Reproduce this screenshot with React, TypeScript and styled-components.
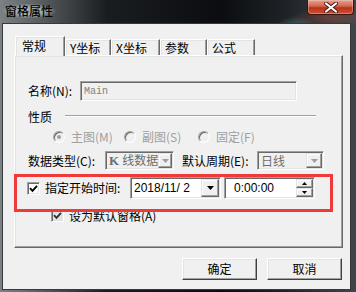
import React from "react";
import styled, { createGlobalStyle } from "styled-components";

const GlobalStyle = createGlobalStyle`
  html, body {
    margin: 0;
    padding: 0;
    background: #1b1e22;
  }
  body {
    font-family: "Noto Sans CJK SC", "Liberation Sans", sans-serif;
    font-size: 12px;
    color: #000;
  }
`;

const Window = styled.div`
  width: 356px;
  height: 292px;
  display: flex;
  flex-direction: column;
  overflow: hidden;
  background:
    radial-gradient(ellipse 22px 14px at 296px 30px, rgba(120, 200, 215, 0.45), transparent),
    radial-gradient(ellipse 40px 10px at 330px 18px, rgba(200, 80, 60, 0.35), transparent),
    linear-gradient(90deg, #7c8184 0%, #565b5e 12%, #1a1d20 30%, #0b0d10 62%, #1e2226 80%, #3f464a 100%);
`;

const TitleBar = styled.div`
  height: 23px;
  flex-shrink: 0;
  display: flex;
  align-items: flex-start;
  justify-content: space-between;
`;

const Title = styled.span`
  margin: 4px 0 0 3px;
  padding: 0 2px;
  font-size: 12px;
  font-weight: 500;
  line-height: 14px;
  color: #000;
  background: radial-gradient(ellipse at center, rgba(175, 182, 188, 0.85) 40%, transparent 75%);
`;

const CloseButton = styled.div`
  width: 47px;
  height: 15px;
  box-sizing: border-box;
  margin-right: 2px;
  border: 1px solid #3a1510;
  border-top: none;
  border-radius: 0 0 4px 4px;
  background: linear-gradient(#e3a292 0%, #d46a53 42%, #b93319 56%, #cc5034 100%);
  box-shadow: inset 0 0 0 1px rgba(255, 220, 210, 0.35);
  display: flex;
  align-items: center;
  justify-content: center;
`;

const Client = styled.div`
  flex: 1;
  margin: 0 5px 2px 2px;
  border: 1px solid #34393c;
  background: #f0f0f0;
  display: flex;
  flex-direction: column;
  padding: 12px 7px 0 11px;
`;

const TabRow = styled.div`
  height: 19px;
  display: flex;
  align-items: flex-end;
  padding-left: 1px;
  position: relative;
  z-index: 1;
`;

const Tab = styled.div<{ $active?: boolean; $w: number }>`
  width: ${(p) => p.$w}px;
  height: ${(p) => (p.$active ? 20 : 16)}px;
  margin-bottom: ${(p) => (p.$active ? -1 : 0)}px;
  box-sizing: border-box;
  background: #f0f0f0;
  border-top: 1px solid #fff;
  border-left: 1px solid #fff;
  border-right: 1px solid #696969;
  border-radius: 2px 0 0 0;
  box-shadow: inset -1px 0 0 #a0a0a0, inset 1px 1px 0 #e3e3e3;
  padding: ${(p) => (p.$active ? "3px 0 0 6px" : "2px 0 0 4px")};
  font-size: 12px;
  line-height: 12px;
  white-space: nowrap;
`;

const Panel = styled.div`
  width: 329px;
  height: 193px;
  box-sizing: border-box;
  border-top: 1px solid #fff;
  border-left: 1px solid #fff;
  border-right: 1px solid #696969;
  border-bottom: 1px solid #696969;
  box-shadow: inset -1px -1px 0 #a0a0a0, inset 1px 1px 0 #e3e3e3;
  padding: 25px 0 0 13px;
  position: relative;
  display: flex;
  flex-direction: column;
`;

const Row = styled.div<{ $top?: number; $h: number; $indent?: number }>`
  display: flex;
  align-items: center;
  height: ${(p) => p.$h}px;
  margin-top: ${(p) => p.$top ?? 0}px;
  padding-left: ${(p) => p.$indent ?? 0}px;
`;

const Label = styled.span<{ $w?: number; $gap?: number; $muted?: boolean }>`
  display: inline-block;
  width: ${(p) => (p.$w ? `${p.$w}px` : "auto")};
  margin-left: ${(p) => p.$gap ?? 0}px;
  font-size: 12px;
  line-height: 12px;
  white-space: nowrap;
  color: ${(p) => (p.$muted ? "#a0a0a0" : "#000")};
`;

const Field = styled.div<{ $w: number; $h: number; $white?: boolean; $gap?: number }>`
  width: ${(p) => p.$w}px;
  height: ${(p) => p.$h}px;
  margin-left: ${(p) => p.$gap ?? 0}px;
  box-sizing: border-box;
  border-top: 1px solid #a0a0a0;
  border-left: 1px solid #a0a0a0;
  border-right: 1px solid #fff;
  border-bottom: 1px solid #fff;
  box-shadow: inset 1px 1px 0 #696969, inset -1px -1px 0 #e3e3e3;
  background: ${(p) => (p.$white ? "#fff" : "#f0f0f0")};
  display: flex;
  align-items: center;
  padding: 1px;
`;

const MonoText = styled.span`
  font-family: "Liberation Mono", monospace;
  font-size: 10px;
  color: #808080;
  padding-left: 2px;
`;

const ComboText = styled.span`
  flex: 1;
  padding-left: 2px;
  font-size: 12px;
  line-height: 12px;
  color: #6d6d6d;
  white-space: nowrap;
`;

const SerifK = styled.span`
  font-family: "Liberation Serif", serif;
  font-weight: bold;
  font-size: 13px;
  margin-right: 3px;
`;

const DateText = styled.span<{ $pad: number }>`
  flex: 1;
  padding-left: ${(p) => p.$pad}px;
  font-family: "Liberation Sans", sans-serif;
  font-size: 12px;
  line-height: 14px;
  white-space: pre;
`;

const DropButton = styled.div<{ $w: number; $h: number }>`
  width: ${(p) => p.$w}px;
  height: ${(p) => p.$h}px;
  box-sizing: border-box;
  background: #f0f0f0;
  border-top: 1px solid #e3e3e3;
  border-left: 1px solid #e3e3e3;
  border-right: 1px solid #696969;
  border-bottom: 1px solid #696969;
  box-shadow: inset -1px -1px 0 #a0a0a0, inset 1px 1px 0 #fff;
  display: flex;
  align-items: center;
  justify-content: center;
`;

const Spin = styled.div`
  display: flex;
  flex-direction: column;
  align-self: stretch;
`;

const Group = styled.div`
  display: flex;
  align-items: flex-start;
  height: 12px;
  margin-top: 10px;
`;

const EtchedLine = styled.div`
  width: 251px;
  margin: 4px 0 0 13px;
  border-top: 1px solid #a0a0a0;
  border-bottom: 1px solid #fff;
`;

const RadioItem = styled.div<{ $w?: number }>`
  display: flex;
  align-items: center;
  width: ${(p) => (p.$w ? `${p.$w}px` : "auto")};
`;

const RadioDot = styled.span<{ $on?: boolean }>`
  width: 12px;
  height: 12px;
  box-sizing: border-box;
  border-radius: 50%;
  border: 1px solid;
  border-color: #a0a0a0 #fff #fff #a0a0a0;
  box-shadow: inset 1px 1px 0 #696969;
  background: #f0f0f0;
  margin-right: 6px;
  display: flex;
  align-items: center;
  justify-content: center;
  &::after {
    content: "";
    width: 4px;
    height: 4px;
    border-radius: 50%;
    background: ${(p) => (p.$on ? "#a0a0a0" : "transparent")};
  }
`;

const CheckBox = styled.span<{ $gap?: number; $dim?: boolean }>`
  width: 13px;
  height: 13px;
  flex-shrink: 0;
  box-sizing: border-box;
  margin-left: ${(p) => p.$gap ?? 0}px;
  border-top: 1px solid #a0a0a0;
  border-left: 1px solid #a0a0a0;
  border-right: 1px solid #fff;
  border-bottom: 1px solid #fff;
  box-shadow: inset 1px 1px 0 #696969, inset -1px -1px 0 #e3e3e3;
  background: ${(p) => (p.$dim ? "#e3e3e3" : "#fff")};
  display: flex;
  align-items: center;
  justify-content: center;
`;

const RedMark = styled.div`
  position: absolute;
  left: -1px;
  top: 118px;
  width: 319px;
  height: 38px;
  box-sizing: border-box;
  border: 3px solid #f03a3a;
  pointer-events: none;
`;

const ButtonRow = styled.div`
  display: flex;
  justify-content: flex-end;
  gap: 10px;
  margin-top: 10px;
  padding-right: 1px;
`;

const Button = styled.div`
  width: 75px;
  height: 22px;
  box-sizing: border-box;
  background: #f0f0f0;
  border-top: 1px solid #fff;
  border-left: 1px solid #fff;
  border-right: 1px solid #404040;
  border-bottom: 1px solid #404040;
  box-shadow: inset -1px -1px 0 #a0a0a0, inset 1px 1px 0 #e3e3e3;
  display: flex;
  align-items: center;
  justify-content: center;
  font-size: 12px;
  line-height: 12px;
`;

const Arrow = ({ color = "#000", w = 7 }: { color?: string; w?: number }) => (
  <svg width={w} height={4} viewBox={`0 0 ${w} 4`}>
    <path d={`M0 0 H${w} L${w / 2} 4 Z`} fill={color} />
  </svg>
);

const Check = ({ color = "#000" }: { color?: string }) => (
  <svg width="9" height="9" viewBox="0 0 9 9">
    <path d="M1 4.2 L3.5 6.8 L8 1.8" fill="none" stroke={color} strokeWidth="1.9" />
  </svg>
);

export default function App() {
  const tabs = [
    { name: "常规", w: 50, active: true },
    { name: "Y坐标", w: 46 },
    { name: "X坐标", w: 49 },
    { name: "参数", w: 47 },
    { name: "公式", w: 48 },
  ];

  return (
    <>
      <GlobalStyle />
      <Window>
        <TitleBar>
          <Title>窗格属性</Title>
          <CloseButton>
            <svg width="16" height="11" viewBox="0 0 16 11">
              <path d="M3 1.5 L13 9.5 M13 1.5 L3 9.5" stroke="#4a1a12" strokeWidth="4" strokeLinecap="round" />
              <path d="M3 1.5 L13 9.5 M13 1.5 L3 9.5" stroke="#fff" strokeWidth="2.2" strokeLinecap="round" />
            </svg>
          </CloseButton>
        </TitleBar>

        <Client>
          <TabRow>
            {tabs.map((t) => (
              <Tab key={t.name} $w={t.w} $active={t.active}>
                {t.name}
              </Tab>
            ))}
          </TabRow>

          <Panel>
            <Row $h={20}>
              <Label $w={52}>名称(N):</Label>
              <Field $w={217} $h={20}>
                <MonoText>Main</MonoText>
              </Field>
            </Row>

            <Group>
              <Label>性质</Label>
              <EtchedLine />
            </Group>

            <Row $top={8} $h={12} $indent={25}>
              <RadioItem $w={71}>
                <RadioDot $on />
                <Label $muted>主图(M)</Label>
              </RadioItem>
              <RadioItem $w={74}>
                <RadioDot />
                <Label $muted>副图(S)</Label>
              </RadioItem>
              <RadioItem>
                <RadioDot />
                <Label $muted>固定(F)</Label>
              </RadioItem>
            </Row>

            <Row $top={8} $h={19}>
              <Label $w={77}>数据类型(C):</Label>
              <Field $w={69} $h={19}>
                <ComboText>
                  <SerifK>K</SerifK>线数据
                </ComboText>
                <DropButton $w={16} $h={15}>
                  <Arrow color="#a0a0a0" />
                </DropButton>
              </Field>
              <Label $w={75} $gap={8}>默认周期(E):</Label>
              <Field $w={67} $h={19}>
                <ComboText>日线</ComboText>
                <DropButton $w={16} $h={15}>
                  <Arrow color="#a0a0a0" />
                </DropButton>
              </Field>
            </Row>

            <Row $top={7} $h={22}>
              <CheckBox $gap={-1}>
                <Check />
              </CheckBox>
              <Label $w={85} $gap={5}>指定开始时间:</Label>
              <Field $w={91} $h={22} $white>
                <DateText $pad={2}>2018/11/ 2</DateText>
                <DropButton $w={18} $h={18}>
                  <Arrow />
                </DropButton>
              </Field>
              <Field $w={91} $h={22} $white $gap={3}>
                <DateText $pad={8}>0:00:00</DateText>
                <Spin>
                  <DropButton $w={17} $h={9}>
                    <svg width="5" height="3" viewBox="0 0 5 3">
                      <path d="M0 3 H5 L2.5 0 Z" fill="#000" />
                    </svg>
                  </DropButton>
                  <DropButton $w={17} $h={9}>
                    <svg width="5" height="3" viewBox="0 0 5 3">
                      <path d="M0 0 H5 L2.5 3 Z" fill="#000" />
                    </svg>
                  </DropButton>
                </Spin>
              </Field>
            </Row>

            <Row $top={10} $h={13}>
              <CheckBox $gap={23} $dim>
                <Check color="#333" />
              </CheckBox>
              <Label $gap={5}>设为默认窗格(A)</Label>
            </Row>

            <RedMark />
          </Panel>

          <ButtonRow>
            <Button>确定</Button>
            <Button>取消</Button>
          </ButtonRow>
        </Client>
      </Window>
    </>
  );
}
